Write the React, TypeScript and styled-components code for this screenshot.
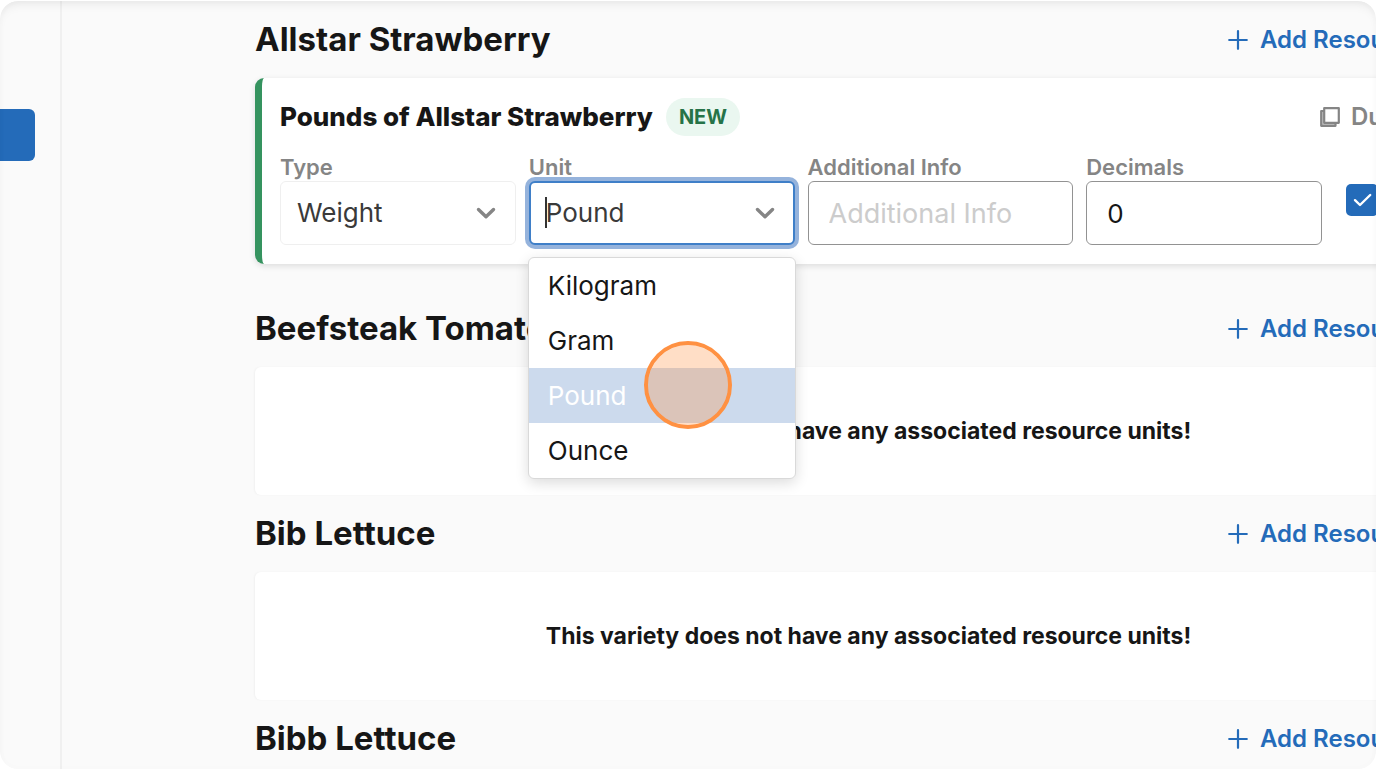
import React from "react";
import styled, { createGlobalStyle, css } from "styled-components";

const colors = {
  page: "#fafafa",
  ink: "#161616",
  muted: "#858585",
  blue: "#246bb9",
  green: "#35935f",
};

const GlobalStyle = createGlobalStyle`
  *, *::before, *::after { box-sizing: border-box; }
  body {
    margin: 0;
    background: #ffffff;
    color: ${colors.ink};
    font-family: Inter, "Liberation Sans", sans-serif;
  }
  button, input, select { font-family: inherit; }
`;

const Page = styled.div`
  height: 100vh;
  padding: 1px 6px 9px 0;
`;

const Frame = styled.div`
  position: relative;
  display: flex;
  height: 100%;
  overflow: hidden;
  border-radius: 18px;
  background: ${colors.page};

  &::after {
    content: "";
    position: absolute;
    inset: 0;
    border-radius: inherit;
    box-shadow: inset 0 7px 12px -6px rgba(0, 0, 0, 0.1),
      inset 0 0 8px rgba(0, 0, 0, 0.015);
    pointer-events: none;
  }
`;

const Sidebar = styled.nav`
  flex: none;
  width: 62px;
  padding-top: 108px;
  border-right: 2px solid #f0f0f0;
`;

const SidebarButton = styled.button`
  display: block;
  width: 35px;
  height: 52px;
  border: 0;
  border-radius: 0 6px 6px 0;
  background: ${colors.blue};
`;

const Main = styled.main`
  flex: 1;
  min-width: 0;
  margin-right: -106px;
  padding-left: 193px;
`;

const Section = styled.section<{ $spaced?: boolean }>`
  margin-bottom: ${(p) => (p.$spaced ? 26 : 0)}px;
`;

const SectionHeader = styled.header`
  display: flex;
  align-items: center;
  justify-content: space-between;
  height: 77px;
`;

const SectionTitle = styled.h2`
  margin: 0;
  padding-bottom: 2px;
  font-size: 33px;
  line-height: 40px;
  font-weight: 700;
`;

const AddButton = styled.button`
  display: flex;
  align-items: center;
  gap: 12px;
  width: 254px;
  padding: 0;
  border: 0;
  background: none;
  color: ${colors.blue};
  font-size: 24px;
  line-height: 32px;
  font-weight: 600;
  white-space: nowrap;
`;

const Card = styled.div`
  border-radius: 6px;
  background: #ffffff;
  box-shadow: -1px 0 2px rgba(0, 0, 0, 0.04);
`;

const EmptyCard = styled(Card)`
  display: flex;
  align-items: center;
  justify-content: center;
  height: 128px;
  font-size: 23px;
  line-height: 32px;
  font-weight: 700;
`;

const UnitCard = styled(Card)`
  height: 186px;
  padding: 20px 25px 20px 18px;
  border-left: 7px solid ${colors.green};
  border-radius: 9px;
  box-shadow: 0 2px 6px rgba(0, 0, 0, 0.12);
`;

const CardHeader = styled.div`
  display: flex;
  align-items: center;
  height: 38px;
`;

const CardTitle = styled.h3`
  margin: 0;
  font-size: 26px;
  line-height: 32px;
  font-weight: 800;
`;

const Badge = styled.span`
  margin-left: 13px;
  padding: 0 13px;
  border-radius: 19px;
  background: #eaf7f0;
  color: #267348;
  font-size: 20px;
  line-height: 38px;
  font-weight: 700;
`;

const DuplicateButton = styled.button`
  display: flex;
  align-items: center;
  gap: 11px;
  width: 137px;
  margin-left: auto;
  padding: 0;
  border: 0;
  background: none;
  color: ${colors.muted};
  font-size: 24px;
  line-height: 32px;
  font-weight: 600;
`;

const FieldRow = styled.div`
  display: flex;
  gap: 13px;
  margin-top: 18px;
`;

const Field = styled.div<{ $grow: number }>`
  position: relative;
  flex: ${(p) => p.$grow} 1 0;
  min-width: 0;
`;

const Label = styled.label`
  display: block;
  color: ${colors.muted};
  font-size: 22px;
  line-height: 27px;
  font-weight: 600;
`;

const Control = styled.div`
  position: relative;

  > svg {
    position: absolute;
    top: 26px;
    right: 20px;
    pointer-events: none;
  }
`;

const controlBox = css`
  display: block;
  width: 100%;
  height: 64px;
  border: 1px solid #929292;
  border-radius: 6px;
  outline: none;
  background: #ffffff;
  color: ${colors.ink};
  font-size: 26px;
`;

const TextInput = styled.input`
  ${controlBox}
  padding: 0 20px;

  &::placeholder {
    color: #cccccc;
    font-size: 27px;
    opacity: 1;
  }
`;

const TypeSelect = styled.select`
  ${controlBox}
  appearance: none;
  padding: 0 16px 2px;
  border-color: #efefef;
  color: #3a3a3a;
`;

const Combobox = styled.input`
  ${controlBox}
  padding: 0 15px 2px;
  border: 2px solid #3f7fc8;
  box-shadow: 0 0 0 4px #95b3dc;
  color: #3a3a3a;
`;

const Caret = styled.span`
  position: absolute;
  top: 16px;
  left: 16px;
  width: 2px;
  height: 31px;
  background: #333333;
`;

const Menu = styled.ul`
  position: absolute;
  z-index: 2;
  top: 103px;
  left: -1px;
  right: -1px;
  margin: 0;
  padding: 0;
  border: 1px solid #d9d9d9;
  border-radius: 6px;
  background: #ffffff;
  box-shadow: 0 4px 14px rgba(0, 0, 0, 0.14);
  list-style: none;
`;

const Option = styled.li<{ $active?: boolean }>`
  padding: 0 19px;
  background: ${(p) => (p.$active ? "#ccdaed" : "transparent")};
  color: ${(p) => (p.$active ? "#ffffff" : colors.ink)};
  font-size: 26px;
  line-height: 55px;
`;

const ClickMarker = styled.span`
  position: absolute;
  z-index: 3;
  top: 187px;
  left: 115px;
  width: 88px;
  height: 88px;
  border: 4px solid #ff9142;
  border-radius: 50%;
  background: rgba(255, 145, 66, 0.3);
  background-clip: padding-box;
  pointer-events: none;
`;

const CheckCell = styled.div`
  position: relative;
  flex: none;
  width: 111px;
  margin: 30px 0 0 11px;

  svg {
    position: absolute;
    top: 9px;
    left: 7px;
    pointer-events: none;
  }
`;

const Checkbox = styled.input`
  display: block;
  appearance: none;
  width: 32px;
  height: 32px;
  margin: 0;
  border-radius: 5px;
  background: ${colors.blue};
`;

const PlusIcon = () => (
  <svg width="20" height="20" viewBox="0 0 20 20" fill="none" stroke="currentColor" strokeWidth="2.2" strokeLinecap="round" aria-hidden="true">
    <path d="M10 1.2v17.6M1.2 10h17.6" />
  </svg>
);

const CopyIcon = () => (
  <svg width="20" height="20" viewBox="0 0 20 20" fill="none" stroke="currentColor" strokeWidth="2.2" strokeLinejoin="round" aria-hidden="true">
    <path d="M1 4h3v12h11v3H1z" fill="#c4c4c4" stroke="none" />
    <path d="M4 4H1.2v14.8H15.5V16" />
    <path d="M4.2 1.2h14.6v14.6H4.2z" />
  </svg>
);

const ChevronIcon = () => (
  <svg width="20" height="13" viewBox="0 0 20 13" fill="none" stroke="#858585" strokeWidth="3.4" strokeLinecap="round" strokeLinejoin="round" aria-hidden="true">
    <path d="M2.5 2.5 10 9.8l7.5-7.3" />
  </svg>
);

const CheckIcon = () => (
  <svg width="20" height="14" viewBox="0 0 20 14" fill="none" stroke="#ffffff" strokeWidth="2.4" strokeLinecap="round" strokeLinejoin="round" aria-hidden="true">
    <path d="M2 7.2 7 12 17.2 2" />
  </svg>
);

const units = ["Kilogram", "Gram", "Pound", "Ounce"];

function VarietySection({ name, spaced, children }: { name: string; spaced?: boolean; children?: React.ReactNode }) {
  return (
    <Section $spaced={spaced}>
      <SectionHeader>
        <SectionTitle>{name}</SectionTitle>
        <AddButton type="button">
          <PlusIcon />
          Add Resou
        </AddButton>
      </SectionHeader>
      {children}
    </Section>
  );
}

function UnitEditor() {
  return (
    <UnitCard>
      <CardHeader>
        <CardTitle>Pounds of Allstar Strawberry</CardTitle>
        <Badge>NEW</Badge>
        <DuplicateButton type="button">
          <CopyIcon />
          Du
        </DuplicateButton>
      </CardHeader>
      <FieldRow>
        <Field $grow={236}>
          <Label htmlFor="type">Type</Label>
          <Control>
            <TypeSelect id="type" defaultValue="Weight">
              <option>Weight</option>
            </TypeSelect>
            <ChevronIcon />
          </Control>
        </Field>
        <Field $grow={266}>
          <Label htmlFor="unit">Unit</Label>
          <Control>
            <Combobox id="unit" role="combobox" aria-expanded="true" aria-controls="unit-options" defaultValue="Pound" />
            <Caret />
            <ChevronIcon />
          </Control>
          <Menu id="unit-options" role="listbox">
            {units.map((unit) => (
              <Option key={unit} role="option" aria-selected={unit === "Pound"} $active={unit === "Pound"}>
                {unit}
              </Option>
            ))}
          </Menu>
          <ClickMarker />
        </Field>
        <Field $grow={266}>
          <Label htmlFor="info">Additional Info</Label>
          <TextInput id="info" placeholder="Additional Info" />
        </Field>
        <Field $grow={236}>
          <Label htmlFor="decimals">Decimals</Label>
          <TextInput id="decimals" defaultValue="0" />
        </Field>
        <CheckCell>
          <Checkbox type="checkbox" defaultChecked aria-label="Enabled" />
          <CheckIcon />
        </CheckCell>
      </FieldRow>
    </UnitCard>
  );
}

const EmptyUnits = () => <EmptyCard>This variety does not have any associated resource units!</EmptyCard>;

export default function App() {
  return (
    <Page>
      <GlobalStyle />
      <Frame>
        <Sidebar>
          <SidebarButton type="button" aria-label="Menu" />
        </Sidebar>
        <Main>
          <VarietySection name="Allstar Strawberry" spaced>
            <UnitEditor />
          </VarietySection>
          <VarietySection name="Beefsteak Tomato">
            <EmptyUnits />
          </VarietySection>
          <VarietySection name="Bib Lettuce">
            <EmptyUnits />
          </VarietySection>
          <VarietySection name="Bibb Lettuce" />
        </Main>
      </Frame>
    </Page>
  );
}
